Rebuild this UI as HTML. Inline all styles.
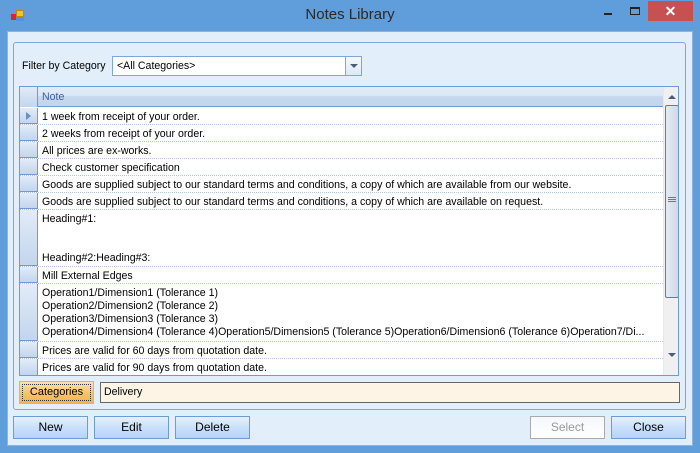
<!DOCTYPE html>
<html><head><style>
*{margin:0;padding:0;box-sizing:border-box}
body{width:700px;height:453px;background:#5f9ddb;font-family:"Liberation Sans",sans-serif;font-size:11px;position:relative;overflow:hidden;color:#000}
.a{position:absolute}
.title{left:0;top:6px;width:700px;text-align:center;font-size:15px;color:#2a2a2a}
.client{left:7px;top:31px;width:686px;height:415px;background:#e3eefb;border:1px solid #8cb3e3}
.grp{left:13px;top:42px;width:673px;height:368px;border:1px solid #7ea6da;border-radius:3px}
.btn{height:23px;border:1px solid #6d9bd6;background:linear-gradient(#e6f1fd,#c9e0fb 50%,#b4d4f9);text-align:center;line-height:21px;font-size:12px}
.grid{left:19px;top:86px;width:660px;height:290px;border:1px solid #6d9bd6;background:#fff;overflow:hidden}
.hdr{position:absolute;left:0;top:0;width:643px;height:20px;background:linear-gradient(#e4edf8,#dbe7f5 45%,#c5d8ee 50%,#c3d6ec);border-bottom:1px solid #6d9bd6}
.row{position:absolute;left:0;width:643px;border-bottom:1px dotted #b5c4d8}
.rh{position:absolute;left:0;top:0;width:18px;height:100%;background:linear-gradient(#e3ecf8,#d2e0f2 50%,#c4d5ec);border-right:1px solid #6d9bd6;border-bottom:1px solid #6d9bd6}
.tx{position:absolute;left:22px;top:3px;font-size:10.6px;line-height:13px;white-space:nowrap;width:618px;overflow:hidden}
</style></head><body>
<div class="a" style="left:11px;top:10px;width:13px;height:11px">
<div class="a" style="left:0;top:4px;width:5px;height:6px;background:#d23"></div>
<div class="a" style="left:5px;top:0;width:8px;height:7px;background:#f4c230;border:1px solid #b78a10"></div>
<div class="a" style="left:5px;top:7px;width:8px;height:4px;background:#5b8fd6"></div>
</div>
<div class="a title">Notes Library</div>
<div class="a" style="left:604px;top:13px;width:8px;height:2px;background:#222"></div>
<div class="a" style="left:630px;top:7px;width:10px;height:8px;border:1px solid #222;border-top-width:2px"></div>
<div class="a" style="left:648px;top:1px;width:45px;height:20px;background:#c75050;color:#fff;text-align:center;font-size:14px;line-height:20px;font-weight:bold">✕</div>
<div class="a client"></div>
<div class="a grp"></div>
<div class="a" style="left:22px;top:60px;font-size:10.6px">Filter by Category</div>
<div class="a" style="left:112px;top:56px;width:250px;height:20px;background:#fff;border:1px solid #7ea6da">
<div class="a" style="left:4px;top:3px;font-size:10.6px">&lt;All Categories&gt;</div>
<div class="a" style="left:232px;top:0;width:16px;height:18px;border-left:1px solid #7ea6da;background:linear-gradient(#f4f8fd,#dde9f7)"><div class="a" style="left:4px;top:7px;border-left:4px solid transparent;border-right:4px solid transparent;border-top:4px solid #4b5b7a"></div></div>
</div>
<div class="a grid">
<div class="hdr"><div class="rh" style="height:20px;border-bottom:none"></div><div class="tx" style="top:4px;color:#3b5f9b">Note</div></div>
<div class="row" style="top:21px;height:17px"><div class="rh"></div><div class="a" style="left:6px;top:4px;border-top:4px solid transparent;border-bottom:4px solid transparent;border-left:5px solid #6a8fc0"></div><div class="tx">1 week from receipt of your order.</div></div>
<div class="row" style="top:38px;height:17px"><div class="rh"></div><div class="tx">2 weeks from receipt of your order.</div></div>
<div class="row" style="top:55px;height:17px"><div class="rh"></div><div class="tx">All prices are ex-works.</div></div>
<div class="row" style="top:72px;height:17px"><div class="rh"></div><div class="tx">Check customer specification</div></div>
<div class="row" style="top:89px;height:17px"><div class="rh"></div><div class="tx">Goods are supplied subject to our standard terms and conditions, a copy of which are available from our website.</div></div>
<div class="row" style="top:106px;height:17px"><div class="rh"></div><div class="tx">Goods are supplied subject to our standard terms and conditions, a copy of which are available on request.</div></div>
<div class="row" style="top:123px;height:57px"><div class="rh"></div><div class="tx">Heading#1:<br><br><br>Heading#2:Heading#3:</div></div>
<div class="row" style="top:180px;height:17px"><div class="rh"></div><div class="tx">Mill External Edges</div></div>
<div class="row" style="top:197px;height:58px"><div class="rh"></div><div class="tx">Operation1/Dimension1 (Tolerance 1)<br>Operation2/Dimension2 (Tolerance 2)<br>Operation3/Dimension3 (Tolerance 3)<br>Operation4/Dimension4 (Tolerance 4)Operation5/Dimension5 (Tolerance 5)Operation6/Dimension6 (Tolerance 6)Operation7/Di...</div></div>
<div class="row" style="top:255px;height:17px"><div class="rh"></div><div class="tx">Prices are valid for 60 days from quotation date.</div></div>
<div class="row" style="top:272px;height:17px;border-bottom:none"><div class="rh"></div><div class="tx">Prices are valid for 90 days from quotation date.</div></div>
<div class="a" style="left:643px;top:0;width:16px;height:288px;background:#f0f0f0;border-left:1px solid #e8e8e8">
<div class="a" style="left:4px;top:8px;border-left:4px solid transparent;border-right:4px solid transparent;border-bottom:4px solid #4b5b7a"></div>
<div class="a" style="left:1px;top:18px;width:14px;height:193px;border:1px solid #6a7a9a;border-radius:2px;background:linear-gradient(90deg,#e6ebf2,#cfd9e6)"></div>
<div class="a" style="left:4px;top:110px;width:8px;height:5px;border-top:1px solid #777;border-bottom:1px solid #777"><div style="margin-top:1px;height:1px;background:#777"></div></div>
<div class="a" style="left:4px;top:266px;border-left:4px solid transparent;border-right:4px solid transparent;border-top:4px solid #4b5b7a"></div>
</div>
</div>
<div class="a btn" style="left:19px;top:381px;width:75px;background:linear-gradient(#fde2b0,#fbc56a 50%,#f9b24a);border-color:#f0b050"><div style="margin:2px;border:1px dotted #333;line-height:15px;font-size:11px">Categories</div></div>
<div class="a" style="left:100px;top:382px;width:580px;height:21px;background:#fdf4e6;border:1px solid #666"><div class="a" style="left:3px;top:3px;font-size:10.6px">Delivery</div></div>
<div class="a btn" style="left:13px;top:416px;width:75px">New</div>
<div class="a btn" style="left:94px;top:416px;width:75px">Edit</div>
<div class="a btn" style="left:175px;top:416px;width:75px">Delete</div>
<div class="a btn" style="left:530px;top:416px;width:75px;border-color:#aaa;background:linear-gradient(#f4f8fd,#fff);color:#999">Select</div>
<div class="a btn" style="left:611px;top:416px;width:75px">Close</div>
</body></html>
